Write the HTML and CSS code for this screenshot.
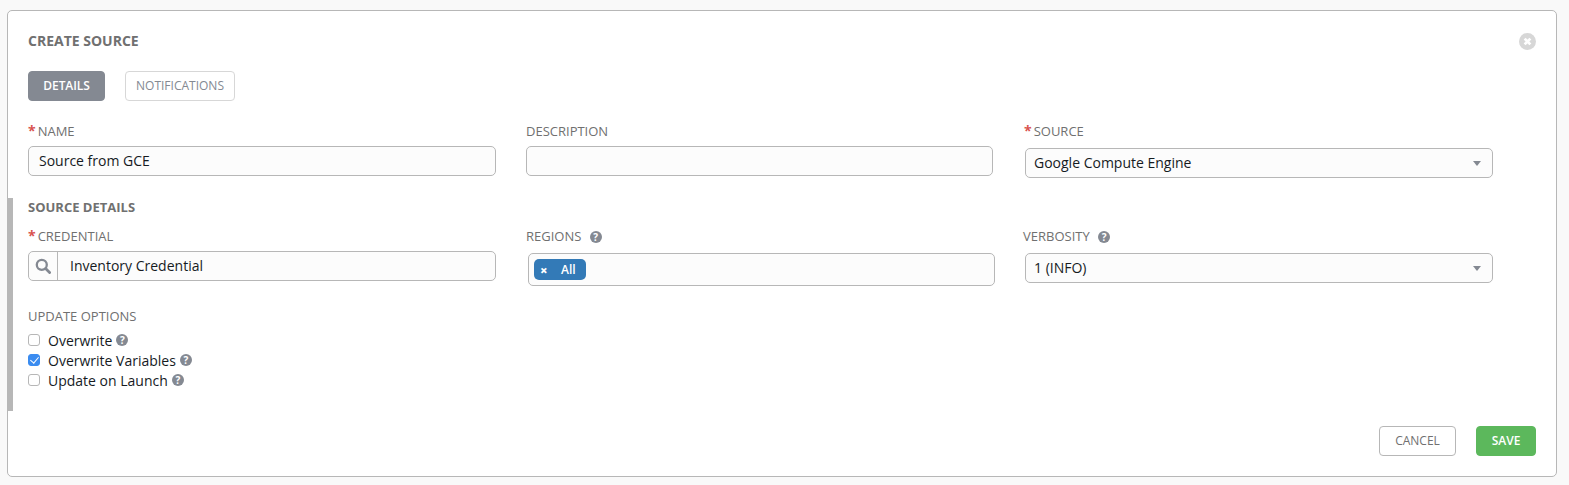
FILE: index.html
```html
<!DOCTYPE html>
<html lang="en">
<head>
    <title>Create Source</title>
    <link rel="stylesheet" href="styles.css">
</head>
<body>
    <div class="panel">
        <div class="panel-head">
            <h2 class="panel-title">CREATE SOURCE</h2>
            <svg class="close-icon" viewBox="0 0 16 16">
                <circle cx="8" cy="8" r="8" fill="#d7d7d7"/>
                <path d="M5.3 5.3l5.4 5.4M10.7 5.3l-5.4 5.4" stroke="#fff" stroke-width="2.6"/>
            </svg>
        </div>

        <div class="tabs">
            <button class="tab tab-active">DETAILS</button>
            <button class="tab">NOTIFICATIONS</button>
        </div>

        <div class="form-grid top-row">
            <div class="field">
                <label class="label"><span class="star">*</span>NAME</label>
                <input class="input" type="text" value="Source from GCE">
            </div>
            <div class="field">
                <label class="label">DESCRIPTION</label>
                <input class="input input-short" type="text">
            </div>
            <div class="field">
                <label class="label"><span class="star">*</span>SOURCE</label>
                <div class="select-wrap">
                    <select class="input select"><option>Google Compute Engine</option></select>
                    <span class="caret"></span>
                </div>
            </div>
        </div>

        <div class="source-details">
            <h3 class="section-title">SOURCE DETAILS</h3>
            <div class="form-grid">
                <div class="field">
                    <label class="label"><span class="star">*</span>CREDENTIAL</label>
                    <div class="lookup">
                        <span class="lookup-btn">
                            <svg class="search-icon" viewBox="0 0 16 16">
                                <circle cx="6.8" cy="6.8" r="5" fill="none" stroke="#848992" stroke-width="2.3"/>
                                <path d="M10.6 10.6l4 4" stroke="#848992" stroke-width="2.8" stroke-linecap="round"/>
                            </svg>
                        </span>
                        <input class="lookup-input" type="text" value="Inventory Credential">
                    </div>
                </div>
                <div class="field">
                    <label class="label">REGIONS <span class="help help-label">?</span></label>
                    <div class="multi">
                        <span class="pill"><span class="pill-x">×</span>All</span>
                    </div>
                </div>
                <div class="field">
                    <label class="label label-flush">VERBOSITY <span class="help help-label">?</span></label>
                    <div class="select-wrap">
                        <select class="input select"><option>1 (INFO)</option></select>
                        <span class="caret"></span>
                    </div>
                </div>
            </div>

            <div class="label options-title">UPDATE OPTIONS</div>
            <label class="check-row"><input class="check" type="checkbox">Overwrite <span class="help">?</span></label>
            <label class="check-row"><input class="check" type="checkbox" checked>Overwrite Variables <span class="help">?</span></label>
            <label class="check-row"><input class="check" type="checkbox">Update on Launch <span class="help">?</span></label>
        </div>

        <div class="actions">
            <button class="btn btn-cancel">CANCEL</button>
            <button class="btn btn-save">SAVE</button>
        </div>
    </div>
</body>
</html>
```

FILE: styles.css
```css
*{
    margin: 0;
    padding: 0;
    box-sizing: border-box;
}
body{
    font-family: "Open Sans", sans-serif;
    font-size: 14px;
    background-color: #f9f9f9;
    color: #161b1f;
    height: 485px;
    overflow: hidden;
    padding: 10px 12px 0 7px;
}
.panel{
    height: 467px;
    background-color: white;
    border: 1px solid #b7b7b7;
    border-radius: 5px;
    padding: 20px 20px 0 20px;
}
.panel-head{
    display: flex;
    justify-content: space-between;
    align-items: center;
    height: 20px;
}
.panel-title{
    font-size: 14px;
    font-weight: 700;
    color: #707070;
    padding-bottom: 2px;
}
.close-icon{
    width: 17px;
    height: 17px;
}
.tabs{
    display: flex;
    gap: 20px;
    margin-top: 20px;
}
.tab{
    height: 30px;
    font-family: inherit;
    font-size: 12px;
    border-radius: 4px;
    border: 1px solid #d7d7d7;
    background-color: white;
    color: #848992;
    width: 110px;
    padding-bottom: 2px;
}
.tab-active{
    width: 77px;
    background-color: #848992;
    border-color: #848992;
    color: white;
    font-weight: 600;
    letter-spacing: -0.1px;
}
.form-grid{
    display: grid;
    grid-template-columns: 468px 468px 468px;
    column-gap: 30px;
}
.top-row{
    margin-top: 20px;
}
.label{
    display: block;
    font-size: 13px;
    line-height: 20px;
    color: #707070;
}
.star{
    color: #d9534f;
    font-weight: 700;
    margin-right: 2px;
    font-size: 14px;
    line-height: 14px;
}
.field .label{
    margin-bottom: 5px;
}
.input{
    display: block;
    width: 100%;
    height: 30px;
    font-family: inherit;
    font-size: 14px;
    color: #161b1f;
    background-color: #fcfcfc;
    border: 1px solid #b7b7b7;
    border-radius: 5px;
    padding: 0 10px 2px 10px;
    outline: none;
}
.input-short{
    width: 467px;
}
.select{
    appearance: none;
    padding: 0 0 2px 8px;
}
.select-wrap{
    position: relative;
    margin: 7px -1px 0 1px;
}
.caret{
    position: absolute;
    right: 12px;
    top: 13px;
    border-left: 4px solid transparent;
    border-right: 4px solid transparent;
    border-top: 5px solid #848992;
}
.source-details{
    height: 213px;
    margin: 20px 0 0 -20px;
    padding-left: 15px;
    border-left: 5px solid #b7b7b7;
}
.section-title{
    font-size: 13px;
    font-weight: 700;
    line-height: 18px;
    color: #707070;
}
.source-details .form-grid{
    margin-top: 10px;
}
.lookup{
    display: flex;
    height: 30px;
    background-color: #fcfcfc;
    border: 1px solid #b7b7b7;
    border-radius: 5px;
}
.lookup-btn{
    width: 29px;
    border-right: 1px solid #b7b7b7;
    display: flex;
    align-items: center;
    justify-content: center;
}
.search-icon{
    width: 16px;
    height: 16px;
}
.lookup-input{
    flex: 1;
    border: none;
    background: none;
    outline: none;
    font-family: inherit;
    font-size: 14px;
    color: #161b1f;
    padding: 0 0 2px 12px;
}
.multi{
    width: 467px;
    height: 33px;
    margin: 7px 0 0 2px;
    background-color: #fcfcfc;
    border: 1px solid #b7b7b7;
    border-radius: 5px;
    padding: 5px;
}
.pill{
    display: inline-flex;
    align-items: center;
    width: 52px;
    height: 21px;
    background-color: #337ab7;
    color: white;
    border-radius: 5px;
    font-size: 12px;
    font-weight: 600;
    padding-left: 6px;
}
.pill-x{
    font-weight: 800;
    font-size: 13px;
    width: 21px;
}
.label-flush{
    margin-left: -1px;
}
.help{
    display: inline-block;
    width: 12px;
    height: 12px;
    border-radius: 50%;
    background-color: #848992;
    color: white;
    font-size: 10px;
    font-weight: 700;
    line-height: 12px;
    text-align: center;
}
.help-label{
    margin-left: 5px;
}
.options-title{
    margin-top: 20px;
    margin-bottom: 4px;
}
.check-row{
    display: flex;
    align-items: center;
    gap: 4px;
    height: 20px;
    font-size: 14px;
    color: #161b1f;
}
.check{
    appearance: none;
    width: 12px;
    height: 12px;
    margin-right: 4px;
    border: 1px solid #b7b7b7;
    border-radius: 3px;
    background-color: white;
    position: relative;
}
.check:checked{
    background-color: #3b8cf0;
    border-color: #3b8cf0;
}
.check:checked::after{
    content: "";
    position: absolute;
    left: 3px;
    top: 0;
    width: 4px;
    height: 7px;
    border: solid white;
    border-width: 0 1.6px 1.6px 0;
    transform: rotate(40deg);
}
.actions{
    display: flex;
    justify-content: flex-end;
    gap: 20px;
    margin-top: 15px;
}
.btn{
    height: 30px;
    font-family: inherit;
    font-size: 12px;
    border-radius: 4px;
    padding-bottom: 2px;
}
.btn-cancel{
    width: 77px;
    background-color: white;
    border: 1px solid #b7b7b7;
    color: #707070;
}
.btn-save{
    width: 60px;
    background-color: #5cb85c;
    border: 1px solid #5cb85c;
    color: white;
    font-weight: 600;
}
```
